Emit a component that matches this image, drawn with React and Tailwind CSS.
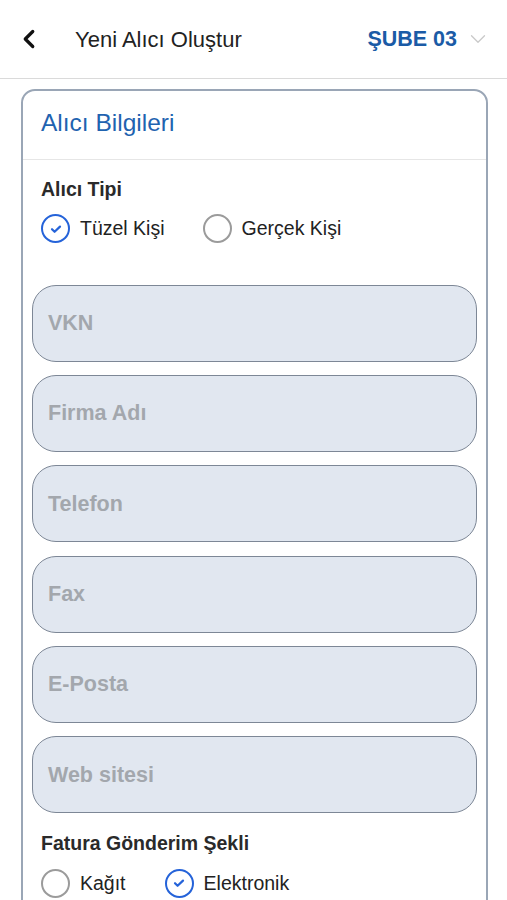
import { ChevronLeft, ChevronDown } from 'lucide-react';

const FIELDS = ['VKN', 'Firma Adı', 'Telefon', 'Fax', 'E-Posta', 'Web sitesi'];

function Radio({ checked, label }) {
  return (
    <div className="flex items-center gap-[10px]">
      {checked ? (
        <span className="w-[29px] h-[29px] rounded-full border-2 border-[#2563d9] flex items-center justify-center">
          <svg width="14" height="14" viewBox="0 0 14 14" fill="none">
            <path d="M3 7.2l2.6 2.6L11 4.6" stroke="#2563d9" strokeWidth="2.2" strokeLinecap="round" strokeLinejoin="round" />
          </svg>
        </span>
      ) : (
        <span className="w-[29px] h-[29px] rounded-full border-2 border-[#9b9b9b]" />
      )}
      <span className="text-[19.5px] text-[#222]">{label}</span>
    </div>
  );
}

export default function App() {
  return (
    <div className="w-[507px] h-[900px] overflow-hidden bg-white" style={{ fontFamily: '"Liberation Sans", Arial, sans-serif' }}>
      {/* Header */}
      <div className="h-[79px] flex items-center border-b border-[#dadada] pl-[14px] pr-[16px]">
        <ChevronLeft size={30} strokeWidth={2.6} className="text-[#111]" />
        <span className="ml-[31px] text-[22px] text-[#222] flex-1">Yeni Alıcı Oluştur</span>
        <span className="text-[21.5px] font-bold text-[#1b5ba6]">ŞUBE 03</span>
        <ChevronDown size={26} strokeWidth={1.2} className="ml-[8px] text-[#c9c9c9]" />
      </div>

      {/* Card */}
      <div className="ml-[21px] w-[467px] mt-[10px] border-2 border-[#9aa6b6] rounded-[14px] h-[900px]">
        <div className="h-[69px] flex items-center px-[18px] pb-[3px] border-b border-[#e6e6e6]">
          <span className="text-[24.5px] text-[#1f63b0]">Alıcı Bilgileri</span>
        </div>

        <div className="px-[9px]">
          <div className="pl-[9px] pt-[15px] text-[19.5px] font-bold text-[#2a2a2a]">Alıcı Tipi</div>
          <div className="pl-[9px] mt-[10px] flex items-center gap-[38px]">
            <Radio checked label="Tüzel Kişi" />
            <Radio label="Gerçek Kişi" />
          </div>

          <div className="mt-[41px] flex flex-col gap-[13.4px]">
            {FIELDS.map((f) => (
              <div key={f} className="h-[77px] rounded-[24px] border border-[#7d8796] bg-[#e1e7f0] flex items-center px-[15px]">
                <span className="text-[21.5px] font-bold text-[#a3a7ad]">{f}</span>
              </div>
            ))}
          </div>

          <div className="pl-[9px] pt-[16px] text-[19.5px] font-bold text-[#2a2a2a]">Fatura Gönderim Şekli</div>
          <div className="pl-[9px] mt-[10px] flex items-center gap-[39px]">
            <Radio label="Kağıt" />
            <Radio checked label="Elektronik" />
          </div>
        </div>
      </div>
    </div>
  );
}
